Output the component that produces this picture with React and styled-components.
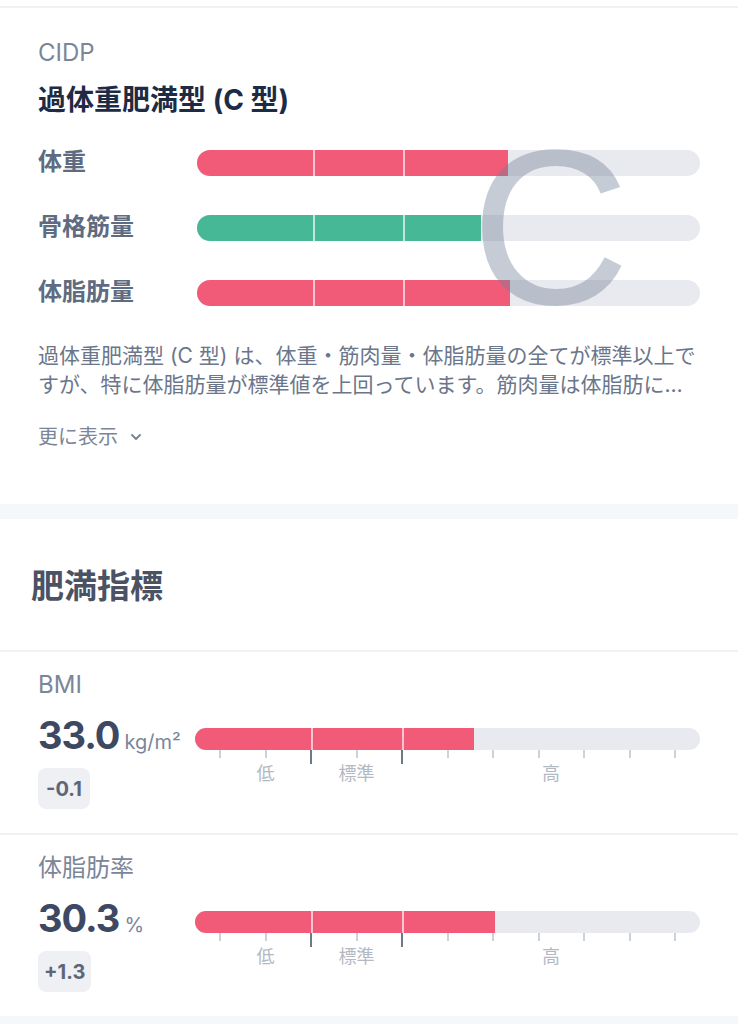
import styled, { createGlobalStyle } from "styled-components";

const GlobalStyle = createGlobalStyle`
  html, body {
    margin: 0;
    padding: 0;
    background: #ffffff;
  }
  body {
    font-family: "Inter", "Noto Sans CJK JP", sans-serif;
    -webkit-font-smoothing: antialiased;
  }
`;

const compositionRows = [
  { label: "体重", fill: 61.8, color: "#f15b78" },
  { label: "骨格筋量", fill: 56.5, color: "#46b896" },
  { label: "体脂肪量", fill: 62.2, color: "#f15b78" },
];

const metrics = [
  { label: "BMI", value: "33.0", unit: "kg/m²", diff: "-0.1", fill: 55.2 },
  { label: "体脂肪率", value: "30.3", unit: "%", diff: "+1.3", fill: 59.4 },
];

const TICKS = Array.from({ length: 11 }, (_, i) => i);

export default function App() {
  return (
    <Page>
      <GlobalStyle />
      <TypeCard>
        <Caption>CIDP</Caption>
        <TypeTitle>過体重肥満型 (C 型)</TypeTitle>

        <BarRows>
          {compositionRows.map(row => (
            <BarRow key={row.label}>
              <RowLabel>{row.label}</RowLabel>
              <Track height={26}>
                <Fill color={row.color} style={{ width: `${row.fill}%` }} />
                <Divider at={116} />
                <Divider at={206} />
              </Track>
            </BarRow>
          ))}
          <TypeLetter>C</TypeLetter>
        </BarRows>

        <Description>
          過体重肥満型 (C 型) は、体重・筋肉量・体脂肪量の全てが標準以上で
          <br />
          すが、特に体脂肪量が標準値を上回っています。筋肉量は体脂肪に比べて標準に近い値です。
        </Description>

        <MoreButton>
          更に表示
          <svg width="12" height="8" viewBox="0 0 12 8" fill="none">
            <path d="M2 2l4 4 4-4" stroke="#7b8699" strokeWidth="2" strokeLinecap="round" strokeLinejoin="round" />
          </svg>
        </MoreButton>
      </TypeCard>

      <Band />

      <SectionHeader>
        <Heading>肥満指標</Heading>
      </SectionHeader>

      {metrics.map(m => (
        <Metric key={m.label}>
          <MetricLabel>{m.label}</MetricLabel>
          <MetricBody>
            <ValueCol>
              <ValueLine>
                <Value>{m.value}</Value>
                <Unit>{m.unit}</Unit>
              </ValueLine>
              <Badge>{m.diff}</Badge>
            </ValueCol>
            <Gauge>
              <Track height={22}>
                <Fill color="#f15b78" style={{ width: `${m.fill}%` }} />
                <Divider at={116} />
                <Divider at={207} />
              </Track>
              <Ticks>
                {TICKS.map(i => (
                  <Tick key={i} major={i === 2 || i === 4} />
                ))}
              </Ticks>
              <Scale>
                <span />
                <ScaleLabel>低</ScaleLabel>
                <ScaleLabel>標準</ScaleLabel>
                <ScaleLabel>高</ScaleLabel>
              </Scale>
            </Gauge>
          </MetricBody>
        </Metric>
      ))}

      <Band />
    </Page>
  );
}

const Page = styled.div`
  width: 738px;
  padding-top: 6px;
  background: #ffffff;
`;

const TypeCard = styled.section`
  border-top: 2px solid #f0f1f4;
  padding: 29px 38px 53px;
`;

const Caption = styled.div`
  font-size: 24px;
  line-height: 32px;
  color: #7b8699;
  font-weight: 400;
`;

const TypeTitle = styled.h2`
  margin: 14px 0 0;
  font-size: 28px;
  line-height: 34px;
  font-weight: 700;
  color: #1e2b45;
`;

const BarRows = styled.div`
  position: relative;
  margin-top: 26px;
  display: flex;
  flex-direction: column;
  gap: 25px;
`;

const BarRow = styled.div`
  display: grid;
  grid-template-columns: 159px 1fr;
  align-items: center;
  height: 40px;
`;

const RowLabel = styled.div`
  font-size: 24px;
  line-height: 34px;
  font-weight: 600;
  color: #5e6b80;
  margin-top: -2px;
`;

const Track = styled.div`
  position: relative;
  height: ${p => p.height}px;
  border-radius: ${p => p.height / 2}px;
  background: #e9eaef;
  overflow: hidden;
`;

const Fill = styled.div`
  height: 100%;
  background: ${p => p.color};
`;

const Divider = styled.div`
  position: absolute;
  top: 0;
  bottom: 0;
  left: ${p => p.at}px;
  width: 2px;
  background: rgba(255, 255, 255, 0.65);
`;

const TypeLetter = styled.div`
  position: absolute;
  left: 433px;
  top: -25px;
  font-family: "Liberation Sans", "Inter", sans-serif;
  font-size: 220px;
  line-height: 1;
  font-weight: 400;
  color: rgba(110, 128, 150, 0.4);
  pointer-events: none;
`;

const Description = styled.p`
  margin: 28px 0 0;
  font-size: 21px;
  line-height: 29px;
  color: #6b768a;
  display: -webkit-box;
  -webkit-box-orient: vertical;
  -webkit-line-clamp: 2;
  overflow: hidden;
`;

const MoreButton = styled.div`
  margin-top: 24px;
  display: flex;
  align-items: center;
  gap: 12px;
  font-size: 20px;
  line-height: 28px;
  color: #7b8699;
`;

const Band = styled.div`
  height: 15px;
  background: #f6f7f9;
`;

const SectionHeader = styled.div`
  padding: 45px 31px 42px;
  border-bottom: 2px solid #f0f1f4;
`;

const Heading = styled.h1`
  margin: 0;
  font-size: 33px;
  line-height: 44px;
  font-weight: 600;
  color: #4a5263;
`;

const Metric = styled.section`
  padding: 17px 38px 24px;
  & + & {
    border-top: 2px solid #f0f1f4;
  }
`;

const MetricLabel = styled.div`
  font-size: 24px;
  line-height: 32px;
  color: #7b8699;
`;

const MetricBody = styled.div`
  margin-top: 12px;
  display: grid;
  grid-template-columns: 157px 1fr;
`;

const ValueCol = styled.div`
  display: flex;
  flex-direction: column;
  align-items: flex-start;
`;

const ValueLine = styled.div`
  display: flex;
  align-items: baseline;
  gap: 5px;
  height: 44px;
`;

const Value = styled.span`
  font-size: 38px;
  line-height: 44px;
  font-weight: 700;
  letter-spacing: -1px;
  color: #3d4963;
`;

const Unit = styled.span`
  font-size: 20px;
  color: #7b8699;
`;

const Badge = styled.div`
  margin-top: 11px;
  padding: 0 6px;
  min-width: 40px;
  height: 41px;
  display: flex;
  align-items: center;
  justify-content: center;
  border-radius: 8px;
  background: #eef0f4;
  font-size: 20px;
  font-weight: 700;
  color: #5d6678;
`;

const Gauge = styled.div`
  padding-top: 15px;
`;

const Ticks = styled.div`
  display: flex;
  justify-content: space-between;
  align-items: flex-start;
  padding: 0 24px;
  height: 14px;
`;

const Tick = styled.div`
  width: 2px;
  height: ${p => (p.major ? 14 : 8)}px;
  background: ${p => (p.major ? "#6f7888" : "#cdd1d8")};
`;

const Scale = styled.div`
  display: grid;
  grid-template-columns: 25px 91px 91px 1fr;
  margin-top: -2px;
`;

const ScaleLabel = styled.span`
  text-align: center;
  font-size: 18px;
  line-height: 24px;
  color: #b3b9c2;
`;
